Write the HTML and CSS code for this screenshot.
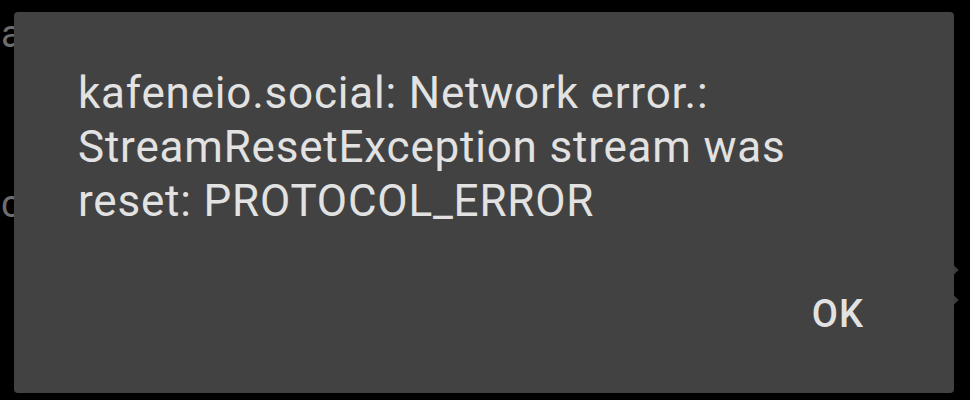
FILE: index.html
```
<!DOCTYPE html>
<html lang="en">
<head>
<meta charset="UTF-8">
<title>Network error</title>
<link rel="stylesheet" href="styles.css">
</head>
<body>

  <!-- list behind the scrim -->
  <div class="backdrop">
    <div class="bg-row row-a">a</div>
    <div class="bg-row row-c">c</div>
    <span class="bg-chev chev-1"></span>
    <span class="bg-chev chev-2"></span>
  </div>

  <div class="dialog">
    <p class="dialog-message">kafeneio.social: Network error.: StreamResetException stream was reset: PROTOCOL_ERROR</p>
    <div class="dialog-actions">
      <button class="dialog-btn" type="button">OK</button>
    </div>
  </div>

</body>
</html>
```

FILE: styles.css
```
html, body{
  margin:0;
  padding:0;
}
body{
  width:970px;
  height:400px;
  background:#000;
  font-family:Roboto, "Liberation Sans", sans-serif;
  position:relative;
  overflow:hidden;
}

.backdrop{
  padding-left:1px;
}
.bg-row{
  color:#6e6e6e;
  font-size:38px;
  line-height:44px;
}
.row-a{ padding-top:12px; }
.row-c{ padding-top:126px; }
.bg-chev{
  position:absolute;
  left:944px;
  width:9px;
  height:9px;
  border-top:3px solid #3c3c3c;
  border-right:3px solid #3c3c3c;
  transform:rotate(45deg);
}
.chev-1{ top:264px; }
.chev-2{ top:294px; }

.dialog{
  position:absolute;
  left:14px;
  top:12px;
  width:940px;
  height:381px;
  box-sizing:border-box;
  background:#424242;
  border-radius:4px;
  padding:54px 64px 0 64px;
  display:flex;
  flex-direction:column;
}
.dialog-message{
  margin:0;
  color:#e2e2e2;
  font-size:44px;
  line-height:54px;
  letter-spacing:0.8px;
  width:800px;
}
.dialog-actions{
  display:flex;
  justify-content:flex-end;
  margin-top:auto;
  padding:0 26px 57px 0;
}
.dialog-btn{
  background:none;
  border:none;
  padding:0;
  color:#e2e2e2;
  font-family:Roboto, "Liberation Sans", sans-serif;
  font-weight:500;
  font-size:38px;
  line-height:44px;
  letter-spacing:1px;
}
```
